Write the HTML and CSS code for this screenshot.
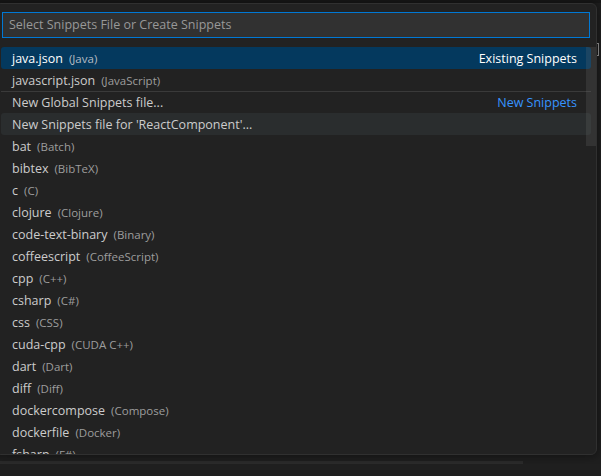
FILE: index.html
```html
<!DOCTYPE html>
<html lang="en">
<head>
    <meta charset="UTF-8">
    <title>Select Snippets File</title>
    <link rel="stylesheet" href="styles.css">
</head>
<body>
    <div class="topbar"></div>
    <div class="stage">
        <span class="bracket"></span>
        <div class="quick">
            <div class="header">
                <div class="input">Select Snippets File or Create Snippets</div>
            </div>
            <div class="list">
                <div class="row selected"><span class="label">java.json</span><span class="desc">(Java)</span><span class="side">Existing Snippets</span></div>
                <div class="row"><span class="label">javascript.json</span><span class="desc">(JavaScript)</span></div>
                <div class="row sep"><span class="label">New Global Snippets file...</span><span class="side link">New Snippets</span></div>
                <div class="row hover"><span class="label">New Snippets file for 'ReactComponent'...</span></div>
                <div class="row"><span class="label">bat</span><span class="desc">(Batch)</span></div>
                <div class="row"><span class="label">bibtex</span><span class="desc">(BibTeX)</span></div>
                <div class="row"><span class="label">c</span><span class="desc">(C)</span></div>
                <div class="row"><span class="label">clojure</span><span class="desc">(Clojure)</span></div>
                <div class="row"><span class="label">code-text-binary</span><span class="desc">(Binary)</span></div>
                <div class="row"><span class="label">coffeescript</span><span class="desc">(CoffeeScript)</span></div>
                <div class="row"><span class="label">cpp</span><span class="desc">(C++)</span></div>
                <div class="row"><span class="label">csharp</span><span class="desc">(C#)</span></div>
                <div class="row"><span class="label">css</span><span class="desc">(CSS)</span></div>
                <div class="row"><span class="label">cuda-cpp</span><span class="desc">(CUDA C++)</span></div>
                <div class="row"><span class="label">dart</span><span class="desc">(Dart)</span></div>
                <div class="row"><span class="label">diff</span><span class="desc">(Diff)</span></div>
                <div class="row"><span class="label">dockercompose</span><span class="desc">(Compose)</span></div>
                <div class="row"><span class="label">dockerfile</span><span class="desc">(Docker)</span></div>
                <div class="row"><span class="label">fsharp</span><span class="desc">(F#)</span></div>
            </div>
            <div class="slider"></div>
        </div>
    </div>
    <div class="hscroll"></div>
</body>
</html>
```

FILE: styles.css
```css
body {
    margin: 0;
    background-color: #1f1f1f;
    font-family: "Open Sans", "Noto Sans", sans-serif;
    font-size: 12.5px;
    color: #cccccc;
    overflow: hidden;
}

.topbar {
    height: 3px;
    background-color: #181818;
}

.stage {
    position: relative;
}

.quick {
    position: relative;
    margin-left: -5px;
    width: 602px;
    height: 452px;
    box-sizing: border-box;
    background-color: #222222;
    border: 1px solid #303030;
    border-radius: 6px;
    box-shadow: 0 0 8px 2px rgba(0, 0, 0, 0.36);
    overflow: hidden;
}

.header {
    padding: 8px 6px 6px 6px;
}

.input {
    height: 26px;
    box-sizing: border-box;
    border: 1px solid #0078d4;
    background-color: #313131;
    color: #989898;
    padding-left: 6px;
    line-height: 24px;
}

.list {
    padding: 3px 5px 0 5px;
}

.row {
    display: flex;
    align-items: center;
    height: 22px;
    box-sizing: border-box;
    padding: 0 14px 0 11px;
    border-radius: 3px;
    white-space: nowrap;
}

.row.selected {
    background-color: #04395e;
}

.row.selected .label,
.row.selected .side {
    color: #ffffff;
}

.row.selected .desc {
    color: #b4bcc4;
}

.row.hover {
    background-color: #2a2d2e;
}

.row.sep {
    border-top: 1px solid #3a3a3a;
    border-radius: 0;
}

.desc {
    margin-left: 6px;
    font-size: 11.5px;
    color: #9d9d9d;
}

.side {
    margin-left: auto;
}

.link {
    color: #3794ff;
}

.slider {
    position: absolute;
    top: 43px;
    right: 0;
    width: 10px;
    height: 99px;
    background-color: rgba(121, 121, 121, 0.2);
}

.bracket {
    position: absolute;
    top: 40px;
    left: 597px;
    width: 1px;
    height: 11px;
    border: 1px solid #9a9a9a;
    border-left: none;
}

.hscroll {
    margin-top: 6px;
    width: 523px;
    height: 3px;
    background-color: #2b2b2b;
}
```
